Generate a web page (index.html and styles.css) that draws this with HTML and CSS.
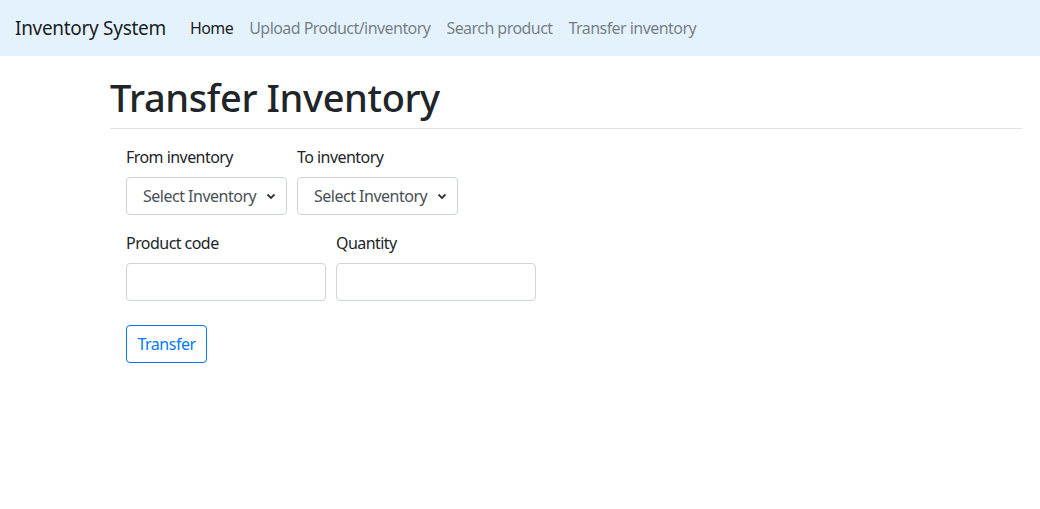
FILE: index.html
```html
<!DOCTYPE html>
<html lang="en">
<head>
<meta charset="utf-8">
<title>Transfer Inventory</title>
<link rel="stylesheet" href="styles.css">
</head>
<body>
<nav class="navbar">
  <a class="brand" href="#">Inventory System</a>
  <ul class="nav">
    <li><a class="nav-link active" href="#">Home</a></li>
    <li><a class="nav-link" href="#">Upload Product/inventory</a></li>
    <li><a class="nav-link" href="#">Search product</a></li>
    <li><a class="nav-link" href="#">Transfer inventory</a></li>
  </ul>
</nav>
<main class="content">
  <h1 class="title">Transfer Inventory</h1>
  <form class="form">
    <div class="row">
      <div class="group">
        <label class="label">From inventory</label>
        <div class="select">
          <span>Select Inventory</span>
          <svg class="chev" width="10" height="7" viewBox="0 0 10 7"><path d="M1.5 1.5 L5 5 L8.5 1.5" fill="none" stroke="#333" stroke-width="1.8"/></svg>
        </div>
      </div>
      <div class="group">
        <label class="label">To inventory</label>
        <div class="select">
          <span>Select Inventory</span>
          <svg class="chev" width="10" height="7" viewBox="0 0 10 7"><path d="M1.5 1.5 L5 5 L8.5 1.5" fill="none" stroke="#333" stroke-width="1.8"/></svg>
        </div>
      </div>
    </div>
    <div class="row">
      <div class="group">
        <label class="label">Product code</label>
        <input class="input" type="text">
      </div>
      <div class="group">
        <label class="label">Quantity</label>
        <input class="input" type="text">
      </div>
    </div>
    <button class="btn" type="button">Transfer</button>
  </form>
</main>
</body>
</html>
```

FILE: styles.css
```css
* { box-sizing: border-box; }
html, body { margin: 0; padding: 0; }
body {
  font-family: "Noto Sans", "Open Sans", sans-serif;
  font-size: 16px;
  line-height: 1.5;
  color: #212529;
  background: #fff;
}
.navbar {
  height: 56px;
  background: #e3f2fd;
  display: flex;
  align-items: center;
  padding: 0 16px 0 15px;
}
.brand {
  font-size: 19px;
  color: rgba(0,0,0,.9);
  text-decoration: none;
  margin-right: 16px;
  letter-spacing: -0.3px;
}
.nav {
  list-style: none;
  margin: 0;
  padding: 0;
  display: flex;
}
.nav-link {
  display: block;
  padding: 8px;
  color: rgba(0,0,0,.5);
  text-decoration: none;
  letter-spacing: -0.55px;
}
.nav-link.active { color: rgba(0,0,0,.9); }
.content {
  padding: 17px 18px 0 110px;
}
.title {
  margin: 0;
  font-size: 38px;
  font-weight: 500;
  line-height: 48px;
  padding-bottom: 7px;
  border-bottom: 1px solid #dee2e6;
  letter-spacing: -0.4px;
}
.form {
  padding: 16px 16px;
}
.row {
  display: flex;
  gap: 10px;
  margin-bottom: 16px;
}
.group { display: flex; flex-direction: column; }
.label {
  margin-bottom: 8px;
  letter-spacing: -0.55px;
}
.select {
  width: 161px;
  height: 38px;
  border: 1px solid #ced4da;
  border-radius: 4px;
  display: flex;
  align-items: center;
  justify-content: space-between;
  padding: 0 10px 0 16px;
  letter-spacing: -0.5px;
  color: #495057;
}
.input {
  width: 200px;
  height: 38px;
  border: 1px solid #ced4da;
  border-radius: 4px;
  font: inherit;
  padding: 6px 12px;
}
.btn {
  margin-top: 8px;
  height: 38px;
  width: 81px;
  font: inherit;
  letter-spacing: -0.5px;
  color: #007bff;
  background: #fff;
  border: 1px solid #007bff;
  border-radius: 4px;
  padding: 0;
}
```
